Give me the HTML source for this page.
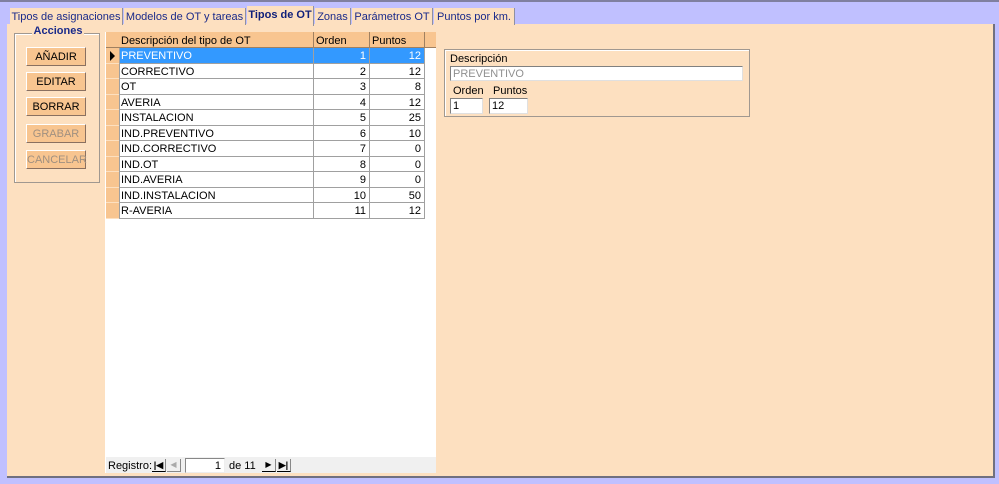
<!DOCTYPE html>
<html><head><meta charset="utf-8"><style>
*{box-sizing:border-box;margin:0;padding:0}
body{width:999px;height:484px;background:#c0c0ff;font-family:"Liberation Sans",Arial,sans-serif;font-size:11px;color:#000;position:relative;overflow:hidden;white-space:nowrap}
.a{position:absolute}
.top{left:0;top:0;width:999px;height:2px;background:#8080a0}
.panel{left:7px;top:24px;width:988px;height:454px;background:#fde0c0;border-right:2px solid #707080;border-bottom:2px solid #707080}
.tab{top:8px;height:17px;line-height:18px;text-align:center;color:#1a2a8a;background:#fde0c0;border-right:1px solid #9090a0;font-size:11px}
.btn{left:26px;width:60px;height:19px;background:#f8c590;border:1px solid #fff;border-right-color:#8a7060;border-bottom-color:#8a7060;text-align:center;line-height:18px;font-size:11px}
.dis{color:#a09080}
.row{left:119px;width:305px;border-bottom:1px solid #a0a0a0;background:#fff}
.row span{position:absolute;top:2px;line-height:13px}
.c1{left:2px}.c2{right:58px}.c3{right:3px}
.vl{top:48px;width:1px;height:171px;background:#a0a0a0}
.inp{background:#fff;border:1px solid #808080;border-right-color:#e0e0e0;border-bottom-color:#e0e0e0;padding-left:2px;line-height:14px}
</style></head><body>
<div class="a top"></div>
<div class="a panel"></div>
<div class="a tab" style="left:10px;width:113px">Tipos de asignaciones</div>
<div class="a tab" style="left:124px;width:122px">Modelos de OT y tareas</div>
<div class="a tab" style="left:247px;width:67px;top:6px;height:20px;font-weight:bold;color:#10207a">Tipos de OT</div>
<div class="a tab" style="left:315px;width:36px">Zonas</div>
<div class="a tab" style="left:352px;width:81px">Parámetros OT</div>
<div class="a tab" style="left:434px;width:81px">Puntos por km.</div>

<div class="a" style="left:14px;top:33px;width:86px;height:150px;border:1px solid #a09890;box-shadow:inset 1px 1px 0 #fff"></div>
<div class="a" style="left:32px;top:25px;width:52px;height:13px;background:#fde0c0;text-align:center;font-weight:bold;color:#1a2a8a;line-height:13px">Acciones</div>
<div class="a btn" style="top:47px">AÑADIR</div>
<div class="a btn" style="top:72px">EDITAR</div>
<div class="a btn" style="top:97px">BORRAR</div>
<div class="a btn dis" style="top:124px">GRABAR</div>
<div class="a btn dis" style="top:150px">CANCELAR</div>

<div class="a" style="left:105px;top:32px;width:331px;height:441px;background:#fff"></div>
<div class="a" style="left:106px;top:32px;width:330px;height:16px;background:#f8c590;border-bottom:1px solid #a08060"></div>
<div class="a" style="left:121px;top:34px;line-height:14px">Descripción del tipo de OT</div>
<div class="a" style="left:313px;top:32px;width:1px;height:16px;background:#a08060"></div>
<div class="a" style="left:316px;top:34px;line-height:14px">Orden</div>
<div class="a" style="left:369px;top:32px;width:1px;height:16px;background:#a08060"></div>
<div class="a" style="left:372px;top:34px;line-height:14px">Puntos</div>
<div class="a" style="left:424px;top:32px;width:1px;height:16px;background:#a08060"></div>

<div class="a row" style="top:48px;height:16px;background:#3399ff;color:#fff"><span class="c1">PREVENTIVO</span><span class="c2">1</span><span class="c3">12</span></div>
<div class="a row" style="top:64px;height:15px"><span class="c1">CORRECTIVO</span><span class="c2">2</span><span class="c3">12</span></div>
<div class="a row" style="top:79px;height:16px"><span class="c1">OT</span><span class="c2">3</span><span class="c3">8</span></div>
<div class="a row" style="top:95px;height:15px"><span class="c1">AVERIA</span><span class="c2">4</span><span class="c3">12</span></div>
<div class="a row" style="top:110px;height:16px"><span class="c1">INSTALACION</span><span class="c2">5</span><span class="c3">25</span></div>
<div class="a row" style="top:126px;height:15px"><span class="c1">IND.PREVENTIVO</span><span class="c2">6</span><span class="c3">10</span></div>
<div class="a row" style="top:141px;height:16px"><span class="c1">IND.CORRECTIVO</span><span class="c2">7</span><span class="c3">0</span></div>
<div class="a row" style="top:157px;height:15px"><span class="c1">IND.OT</span><span class="c2">8</span><span class="c3">0</span></div>
<div class="a row" style="top:172px;height:16px"><span class="c1">IND.AVERIA</span><span class="c2">9</span><span class="c3">0</span></div>
<div class="a row" style="top:188px;height:15px"><span class="c1">IND.INSTALACION</span><span class="c2">10</span><span class="c3">50</span></div>
<div class="a row" style="top:203px;height:16px"><span class="c1">R-AVERIA</span><span class="c2">11</span><span class="c3">12</span></div>
<div class="a vl" style="left:119px"></div>
<div class="a vl" style="left:313px"></div>
<div class="a vl" style="left:369px"></div>
<div class="a vl" style="left:424px"></div>
<div class="a" style="left:106px;top:48px;width:13px;height:171px;background:#f8c590"></div>
<div class="a" style="left:106px;top:63px;width:13px;height:1px;background:#fde0c0;box-shadow:0 15px 0 #fde0c0,0 31px 0 #fde0c0,0 46px 0 #fde0c0,0 62px 0 #fde0c0,0 77px 0 #fde0c0,0 93px 0 #fde0c0,0 108px 0 #fde0c0,0 124px 0 #fde0c0,0 139px 0 #fde0c0,0 155px 0 #fde0c0"></div>
<div class="a" style="left:110px;top:51px;width:0;height:0;border-left:5px solid #000;border-top:5px solid transparent;border-bottom:5px solid transparent"></div>

<div class="a" style="left:106px;top:457px;width:330px;height:16px;background:#f0f0f0"></div>
<div class="a" style="left:108px;top:460px;line-height:13px">Registro:</div>
<div class="a" style="left:152px;top:459px;width:14px;height:13px;border-bottom:1px solid #000;border-right:1px solid #888;font-size:9px;font-weight:bold;line-height:12px;text-align:center">|◀</div>
<div class="a" style="left:167px;top:459px;width:14px;height:13px;border-bottom:1px solid #888;border-right:1px solid #888;font-size:8px;color:#aaa;line-height:12px;text-align:center">◀</div>
<div class="a" style="left:185px;top:458px;width:40px;height:15px;background:#fff;border:1px solid #888;border-right-color:#eee;border-bottom-color:#eee;text-align:right;padding-right:3px;line-height:14px">1</div>
<div class="a" style="left:229px;top:460px;line-height:13px">de 11</div>
<div class="a" style="left:262px;top:459px;width:14px;height:13px;border-bottom:1px solid #000;border-right:1px solid #888;font-size:8px;line-height:12px;text-align:center">▶</div>
<div class="a" style="left:277px;top:459px;width:14px;height:13px;border-bottom:1px solid #000;border-right:1px solid #888;font-size:9px;font-weight:bold;line-height:12px;text-align:center">▶|</div>

<div class="a" style="left:444px;top:49px;width:306px;height:68px;border:1px solid #a09890;box-shadow:inset 1px 1px 0 #fff"></div>
<div class="a" style="left:450px;top:53px;line-height:13px">Descripción</div>
<div class="a inp" style="left:450px;top:66px;width:293px;height:15px;color:#909090">PREVENTIVO</div>
<div class="a" style="left:453px;top:85px;line-height:13px">Orden</div>
<div class="a" style="left:493px;top:85px;line-height:13px">Puntos</div>
<div class="a inp" style="left:450px;top:98px;width:33px;height:16px">1</div>
<div class="a inp" style="left:489px;top:98px;width:39px;height:16px">12</div>
</body></html>
